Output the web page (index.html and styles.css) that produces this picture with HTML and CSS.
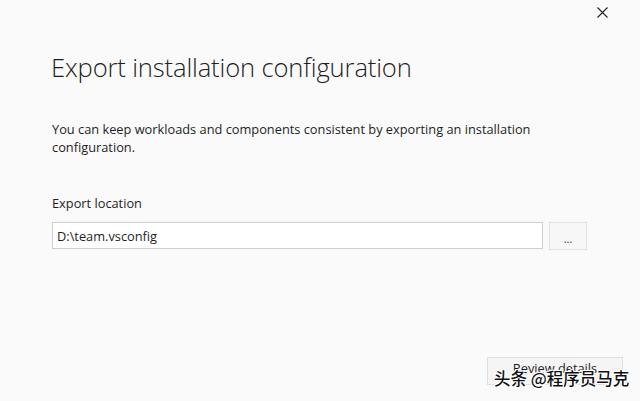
FILE: index.html
```html
<!DOCTYPE html>
<html lang="en">
<head>
    <meta charset="UTF-8">
    <meta name="viewport" content="width=device-width, initial-scale=1.0">
    <title>Export installation configuration</title>
    <link rel="stylesheet" href="styles.css">
</head>
<body>
    <div class="dialog">
        <div class="titlebar">
            <button class="close-button" aria-label="Close">
                <svg width="11" height="11" viewBox="0 0 11 11">
                    <path d="M0.5 0.5 L10.5 10.5 M10.5 0.5 L0.5 10.5" stroke="#222" stroke-width="1.1" fill="none"/>
                </svg>
            </button>
        </div>
        <div class="content">
            <h1>Export installation configuration</h1>
            <p class="description">You can keep workloads and components consistent by exporting an installation configuration.</p>
            <label class="field-label" for="export-location">Export location</label>
            <div class="field-row">
                <input id="export-location" class="path-input" type="text" value="D:\team.vsconfig">
                <button class="browse-button">...</button>
            </div>
        </div>
        <div class="footer">
            <button class="review-button">Review details</button>
        </div>
        <div class="watermark">头条 @程序员马克</div>
    </div>
</body>
</html>
```

FILE: styles.css
```css
body {
    margin: 0;
    background-color: #fafafa;
    font-family: "Open Sans", "Noto Sans", sans-serif;
    color: #1e1e1e;
}
.dialog {
    position: relative;
    width: 640px;
    height: 401px;
    display: flex;
    flex-direction: column;
    overflow: hidden;
}
.titlebar {
    display: flex;
    justify-content: flex-end;
    padding: 7px 32px 0 0;
}
.close-button {
    background: none;
    border: none;
    padding: 0;
    width: 11px;
    height: 11px;
    display: flex;
    cursor: pointer;
}
.content {
    padding: 0 52px;
    flex: 1;
}
h1 {
    font-weight: 300;
    font-size: 25.6px;
    line-height: 32px;
    margin: 34px 0 0 -1px;
    color: #1e1e1e;
    letter-spacing: -0.15px;
}
.description {
    font-size: 12.8px;
    line-height: 18px;
    margin: 36px 0 0;
    color: #1e1e1e;
    width: 520px;
}
.field-label {
    display: block;
    font-size: 12.8px;
    line-height: 18px;
    margin-top: 38px;
}
.field-row {
    display: flex;
    gap: 6px;
    margin-top: 10px;
}
.path-input {
    width: 491px;
    height: 27px;
    box-sizing: border-box;
    border: 1px solid #cfcfcf;
    background: #fff;
    padding: 0 4px;
    font-family: inherit;
    font-size: 12.8px;
    color: #1e1e1e;
    outline: none;
}
.browse-button {
    width: 38px;
    height: 28px;
    box-sizing: border-box;
    border: 1px solid #e3e3e3;
    background: #f7f7f7;
    font-family: inherit;
    font-size: 11px;
    color: #333;
    padding: 4px 0 0;
}
.footer {
    display: flex;
    justify-content: flex-end;
    padding: 0 17px 16px 0;
}
.review-button {
    width: 136px;
    height: 28px;
    box-sizing: border-box;
    border: 1px solid #e0e0e0;
    background: #f5f5f5;
    font-family: inherit;
    font-size: 12.8px;
    color: #1e1e1e;
    padding: 0 0 6px;
}
.watermark {
    position: absolute;
    left: 494px;
    top: 366px;
    font-family: "Noto Sans CJK SC", sans-serif;
    font-size: 16.5px;
    font-weight: 500;
    line-height: 24px;
    color: #111;
    text-shadow: -1px -1px 0 #fff, 1px -1px 0 #fff, -1px 1px 0 #fff, 1px 1px 0 #fff, 0 -1px 0 #fff, 0 1px 0 #fff;
}
```
